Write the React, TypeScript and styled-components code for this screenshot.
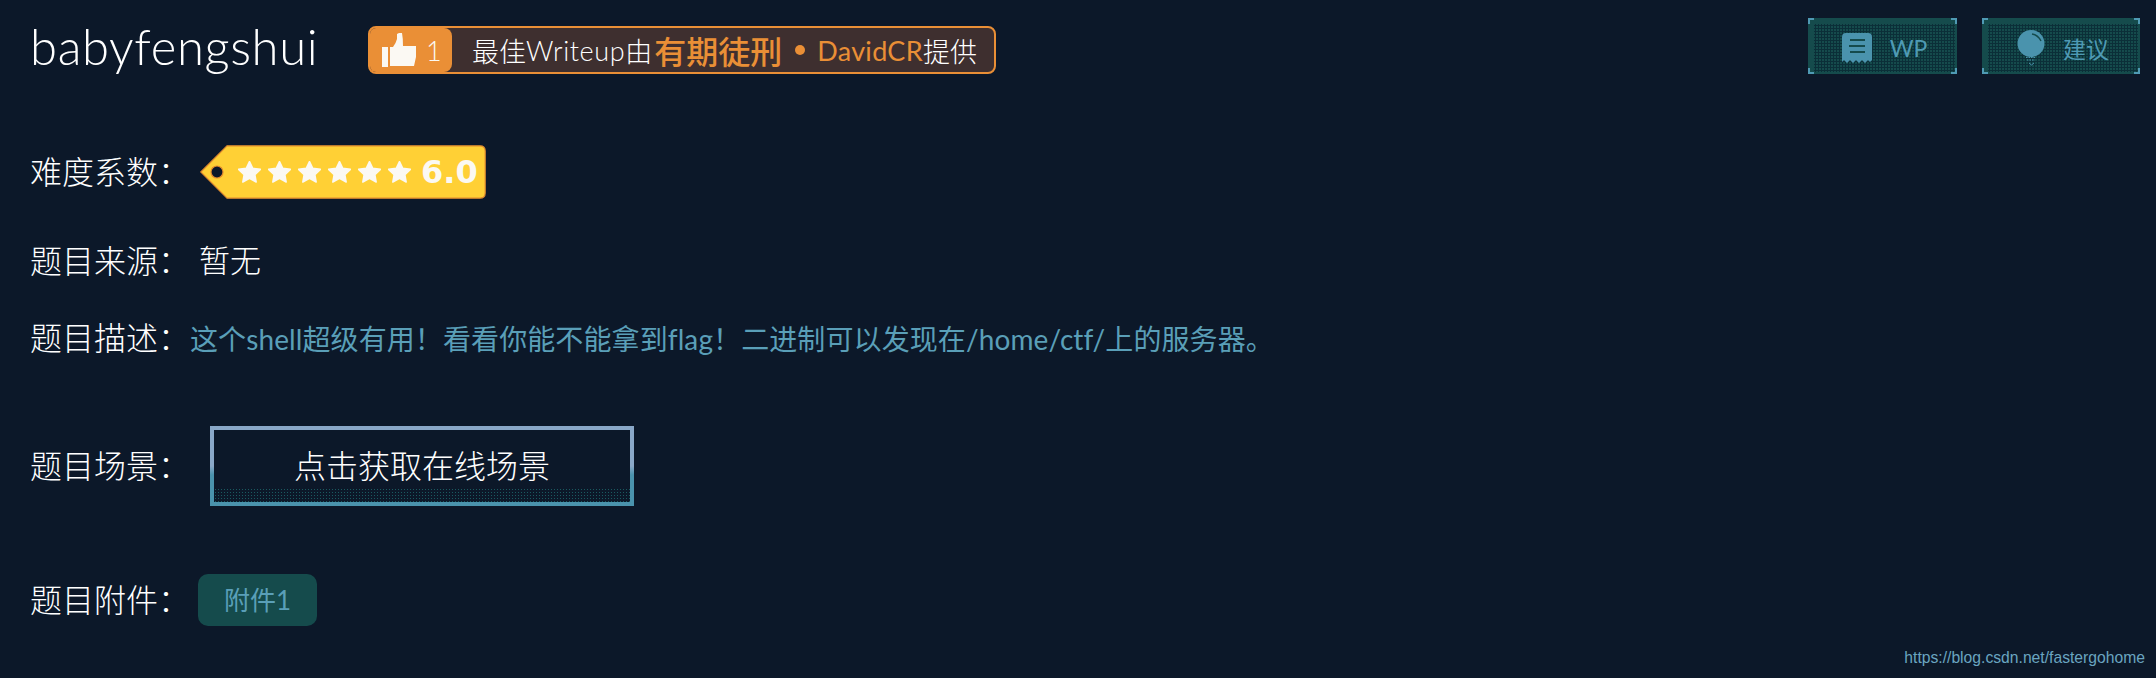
import React from "react";
import styled, { createGlobalStyle } from "styled-components";

const GlobalStyle = createGlobalStyle`
  html, body {
    margin: 0;
    padding: 0;
    background: #0c1829;
    color: #fff;
    font-family: Lato, "Noto Sans CJK SC", sans-serif;
  }
`;

const Star = () => (
  <svg width="23" height="22" viewBox="0 0 24 23">
    <path
      d="M12 0.5 L15.4 7.6 L23.4 8.7 L17.6 14.2 L19 22 L12 18.2 L5 22 L6.4 14.2 L0.6 8.7 L8.6 7.6 Z"
      fill="#fbf9f3"
      stroke="#fbf9f3"
      strokeWidth="1.6"
      strokeLinejoin="round"
    />
  </svg>
);

const ThumbIcon = () => (
  <svg width="35" height="34" viewBox="0 0 35 34">
    <path d="M0 14 H6 V34 H0 Z" fill="#fbf9f3" />
    <path
      d="M8 14 H11 Q14 10 15 6 V1 L17 0 H20 Q21 5 21 13 H34 V24 L32 33 H8 Z"
      fill="#fbf9f3"
    />
  </svg>
);

const BookIcon = () => (
  <svg width="30" height="31" viewBox="0 0 30 31">
    <path
      d="M4 0 H26 Q30 0 30 4 V27 L28 29 L26 27 L23 30 L20 27 L17 30 L14 27 L11 30 L8 27 L5 30 L2 27 L0 29 V4 Q0 0 4 0 Z"
      fill="#4a93ad"
    />
    <path d="M8 7 H23 M7 13 H23 M8 19 H23" stroke="#154b4c" strokeWidth="2" />
  </svg>
);

const BulbIcon = () => (
  <svg width="28" height="36" viewBox="0 0 28 36">
    <circle cx="14" cy="13.5" r="13.5" fill="#4a93ad" />
    <path d="M15 4 Q21 5 24 11" stroke="#154b4c" strokeWidth="1.4" fill="none" />
    <path d="M9 27.5 H19 M10 30 H18" stroke="#4a93ad" strokeWidth="1.2" strokeDasharray="1.5 1" />
    <path d="M12 33 L14.5 35 L17 33" stroke="#4a93ad" strokeWidth="1" fill="none" />
  </svg>
);

const TagShape = () => (
  <TagSvg viewBox="0 0 286 54">
    <path
      d="M0.8 27 L27 0.8 H280 Q285.2 0.8 285.2 6 V48 Q285.2 53.2 280 53.2 H27 Z"
      fill="#ffd035"
      stroke="#e08a2e"
      strokeWidth="1.2"
    />
    <circle cx="17" cy="27" r="6" fill="#0c1829" stroke="#e08a2e" strokeWidth="1.2" />
  </TagSvg>
);

const Corners = () => (
  <>
    <Corner $v="top" $h="left" />
    <Corner $v="top" $h="right" />
    <Corner $v="bottom" $h="left" />
    <Corner $v="bottom" $h="right" />
  </>
);

export default function App() {
  return (
    <>
      <GlobalStyle />
      <Page>
        <Header>
          <Title>babyfengshui</Title>
          <Badge>
            <LikeBox>
              <ThumbIcon />
              <LikeCount>1</LikeCount>
            </LikeBox>
            <BadgeText>
              最佳<Latin>Writeup</Latin>由<Author>有期徒刑</Author>
              <Dot />
              <Nick>DavidCR</Nick>提供
            </BadgeText>
          </Badge>
          <Actions>
            <ActionButton $width={149}>
              <Corners />
              <BookIcon />
              <ActionLabel>WP</ActionLabel>
            </ActionButton>
            <ActionButton $width={158}>
              <Corners />
              <BulbIcon />
              <ActionLabel>建议</ActionLabel>
            </ActionButton>
          </Actions>
        </Header>

        <Row $height={54} $top={71}>
          <Label>难度系数：</Label>
          <Tag>
            <TagShape />
            <Stars>
              {[0, 1, 2, 3, 4, 5].map((i) => (
                <Star key={i} />
              ))}
            </Stars>
            <Score>6.0</Score>
          </Tag>
        </Row>

        <Row $height={40} $top={42}>
          <Label>题目来源：</Label>
          <SourceValue>暂无</SourceValue>
        </Row>

        <Row $height={40} $top={37}>
          <Label>题目描述：</Label>
          <Description>
            这个shell超级有用！看看你能不能拿到flag！二进制可以发现在/home/ctf/上的服务器。
          </Description>
        </Row>

        <Row $height={80} $top={68}>
          <Label>题目场景：</Label>
          <SceneButton>
            <SceneText>点击获取在线场景</SceneText>
          </SceneButton>
        </Row>

        <Row $height={52} $top={68}>
          <Label>题目附件：</Label>
          <Attachment>附件1</Attachment>
        </Row>
      </Page>
      <Watermark>https://blog.csdn.net/fastergohome</Watermark>
    </>
  );
}

const Page = styled.div`
  position: relative;
  width: 2156px;
  height: 678px;
  box-sizing: border-box;
  padding: 18px 16px 0 30px;
  background: #0c1829;
  overflow: hidden;
`;

const Header = styled.div`
  display: flex;
  align-items: flex-start;
  height: 56px;
`;

const Title = styled.div`
  width: 338px;
  font-family: Lato, sans-serif;
  font-size: 49px;
  font-weight: 300;
  letter-spacing: 0.65px;
  line-height: 56px;
  white-space: nowrap;
  color: #fff;
`;

const Badge = styled.div`
  display: flex;
  align-items: stretch;
  width: 628px;
  height: 48px;
  margin-top: 8px;
  box-sizing: border-box;
  border: 2px solid #ea8f36;
  border-radius: 8px;
  background: #3e2f2f;
  overflow: hidden;
`;

const LikeBox = styled.div`
  display: flex;
  align-items: center;
  gap: 9px;
  width: 82px;
  padding-left: 12px;
  box-sizing: border-box;
  background: #ea8f36;
  border-radius: 0 8px 8px 0;
`;

const LikeCount = styled.span`
  font-size: 27px;
  font-weight: 300;
  color: #fbf9f3;
`;

const BadgeText = styled.div`
  display: flex;
  align-items: center;
  padding-left: 20px;
  font-family: Lato, "Noto Sans CJK SC", sans-serif;
  font-size: 27px;
  font-weight: 300;
  white-space: nowrap;
  color: #fff;
`;

const Latin = styled.span`
  letter-spacing: 0.6px;
`;

const Author = styled.span`
  margin-left: 2px;
  font-size: 32px;
  font-weight: 500;
  color: #ea8f36;
`;

const Dot = styled.span`
  width: 10px;
  height: 10px;
  margin: 0 12px 0 13px;
  border-radius: 50%;
  background: #ea8f36;
`;

const Nick = styled(Latin)`
  letter-spacing: 0.3px;
  font-weight: 400;
  color: #ea8f36;
`;

const Actions = styled.div`
  display: flex;
  gap: 25px;
  margin-left: auto;
`;

const ActionButton = styled.div<{ $width: number }>`
  position: relative;
  display: flex;
  align-items: center;
  justify-content: center;
  gap: 18px;
  width: ${(p) => p.$width}px;
  height: 56px;
  padding: 6px 2px 2px 6px;
  box-sizing: border-box;
  border-radius: 4px;
  background:
    radial-gradient(circle at center, #0b2f38 1px, transparent 1.1px) content-box 0 0 / 3px 3px,
    #154b4c;
  color: #4f9ab4;
`;

const Corner = styled.span<{ $v: "top" | "bottom"; $h: "left" | "right" }>`
  position: absolute;
  ${(p) => p.$v}: 0;
  ${(p) => p.$h}: 0;
  width: 4px;
  height: 4px;
  border-${(p) => p.$v}: 2px solid #4f9ab4;
  border-${(p) => p.$h}: 2px solid #4f9ab4;
`;

const ActionLabel = styled.span`
  font-family: Lato, "Noto Sans CJK SC", sans-serif;
  font-size: 23px;
  font-weight: 400;
`;

const Row = styled.div<{ $height: number; $top: number }>`
  display: flex;
  align-items: center;
  height: ${(p) => p.$height}px;
  margin-top: ${(p) => p.$top}px;
`;

const Label = styled.div`
  width: 160px;
  flex: none;
  padding-bottom: 4px;
  font-family: "Noto Sans CJK SC", sans-serif;
  font-size: 32px;
  font-weight: 300;
  line-height: 40px;
  white-space: nowrap;
  color: #fff;
`;

const Tag = styled.div`
  position: relative;
  display: flex;
  align-items: center;
  width: 286px;
  height: 54px;
  margin-left: 10px;
  padding-left: 38px;
  box-sizing: border-box;
`;

const TagSvg = styled.svg`
  position: absolute;
  left: 0;
  top: 0;
  width: 286px;
  height: 54px;
`;

const Stars = styled.div`
  position: relative;
  display: flex;
  gap: 7px;
`;

const Score = styled.span`
  position: relative;
  margin-left: 10px;
  font-family: "DejaVu Sans", sans-serif;
  font-size: 32px;
  font-weight: 700;
  color: #fbf9f3;
`;

const SourceValue = styled.div`
  margin-left: 9px;
  padding-bottom: 5px;
  font-family: "Noto Sans CJK SC", sans-serif;
  font-size: 31px;
  font-weight: 300;
  color: #fff;
`;

const Description = styled.div`
  font-family: Lato, "Noto Sans CJK SC", sans-serif;
  font-size: 28px;
  font-weight: 400;
  letter-spacing: 0.1px;
  white-space: nowrap;
  color: #5a9fb8;
`;

const SceneButton = styled.div`
  position: relative;
  display: flex;
  align-items: center;
  justify-content: center;
  width: 424px;
  height: 80px;
  margin-left: 20px;
  padding-bottom: 5px;
  box-sizing: border-box;
  border: 4px solid;
  border-image: linear-gradient(#8aa8c8 50%, #4a93ad 62%) 1;

  &::after {
    content: "";
    position: absolute;
    left: 0;
    right: 0;
    bottom: 0;
    height: 14px;
    background: radial-gradient(circle at center, #1a5a60 0.8px, transparent 1px) 0 0 / 3px 3px;
  }
`;

const SceneText = styled.span`
  font-family: "Noto Sans CJK SC", sans-serif;
  font-size: 32px;
  font-weight: 300;
  color: #fff;
`;

const Attachment = styled.div`
  display: flex;
  align-items: center;
  justify-content: center;
  width: 119px;
  height: 52px;
  margin-left: 8px;
  padding-bottom: 4px;
  box-sizing: border-box;
  border-radius: 10px;
  background: #154b4c;
  font-family: Lato, "Noto Sans CJK SC", sans-serif;
  font-size: 26px;
  font-weight: 400;
  color: #5a9fb8;
`;

const Watermark = styled.div`
  position: absolute;
  right: 11px;
  top: 649px;
  font-family: "Liberation Sans", sans-serif;
  font-size: 15.7px;
  color: #6aa5c0;
`;
